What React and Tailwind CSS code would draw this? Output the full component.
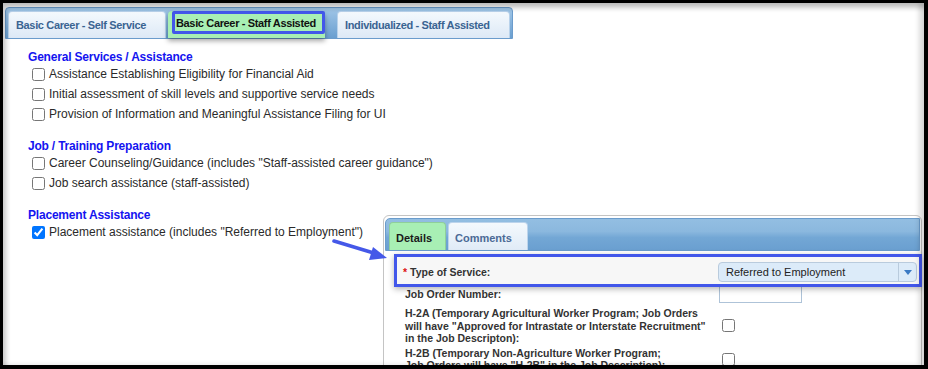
import React from 'react';

const sections = [
  {
    title: 'General Services / Assistance',
    items: [
      { label: 'Assistance Establishing Eligibility for Financial Aid' },
      { label: 'Initial assessment of skill levels and supportive service needs' },
      { label: 'Provision of Information and Meaningful Assistance Filing for UI' },
    ],
  },
  {
    title: 'Job / Training Preparation',
    items: [
      { label: 'Career Counseling/Guidance (includes "Staff-assisted career guidance")' },
      { label: 'Job search assistance (staff-assisted)' },
    ],
  },
  {
    title: 'Placement Assistance',
    items: [{ label: 'Placement assistance (includes "Referred to Employment")', checked: true }],
  },
];

function TopTabs() {
  return (
    <div className="ml-[2px] mt-[4px] w-[508px] h-[32px] rounded-t-[4px] border border-[#6b9ccc] bg-gradient-to-b from-[#a0c6e7] to-[#6a9fd0] flex items-end pl-[2px]">
      <div className="w-[158px] h-[27px] rounded-t-[4px] border border-b-0 border-[#b8d2eb] bg-gradient-to-b from-[#f4f9fd] to-[#dde9f6] flex items-center pl-[7px] text-[11px] font-bold tracking-[-0.35px] text-[#3a6492]">
        Basic Career - Self Service
      </div>
      <div className="relative ml-[2px] w-[157px] h-[27px] rounded-t-[4px] bg-[#a8efb4] shadow-[0_3px_5px_rgba(0,0,0,0.35)] flex items-center pl-[8px] pb-[2px] text-[11px] font-bold tracking-[-0.35px] text-[#111]">
        Basic Career - Staff Assisted
        <div className="absolute left-[4px] top-0 right-0 bottom-[4px] border-[3px] border-[#4257ea] rounded-[2px]" />
      </div>
      <div className="ml-[12px] w-[173px] h-[27px] rounded-t-[4px] border border-b-0 border-[#b8d2eb] bg-gradient-to-b from-[#f4f9fd] to-[#dde9f6] flex items-center pl-[7px] text-[11px] font-bold tracking-[-0.35px] text-[#3a6492]">
        Individualized - Staff Assisted
      </div>
    </div>
  );
}

function Section({ title, items }) {
  return (
    <div className="mt-[15px] first:mt-[11px]">
      <div className="h-[14px] leading-[14px] text-[12px] font-bold tracking-[-0.2px] text-[#1414f0]">{title}</div>
      {items.map((it) => (
        <label key={it.label} className="h-[20px] flex items-center text-[12px] text-[#2a2a2a]">
          <input type="checkbox" defaultChecked={!!it.checked} className="ml-[4px] mr-[4px] w-[13px] h-[13px]" />
          <span>{it.label}</span>
        </label>
      ))}
    </div>
  );
}

function DetailPanel() {
  return (
    <div className="absolute left-[380px] top-[212px] w-[539px] h-[160px] rounded-t-[6px] border border-[#c4c4c4] bg-white z-10">
      <div className="mx-[1px] mt-[2px] h-[33px] rounded-tl-[5px] border border-[#6a9ccc] bg-[linear-gradient(to_bottom,#93bee2_0%,#8bb8de_40%,#73a7d5_60%,#6a9fd0_100%)] flex items-end pl-[3px]">
        <div className="w-[57px] h-[28px] rounded-t-[4px] border border-b-0 border-[#8fcf9a] bg-[#a8efb4] flex items-center pl-[6px] pt-[4px] text-[11px] font-bold text-[#1a1a1a]">
          Details
        </div>
        <div className="ml-[2px] w-[80px] h-[28px] rounded-t-[4px] border border-b-0 border-[#bcd4ec] bg-gradient-to-b from-[#f4f9fd] to-[#e0ebf7] flex items-center pl-[6px] pt-[4px] text-[11px] font-bold text-[#4b6a96]">
          Comments
        </div>
      </div>

      <div className="relative z-10 ml-[10px] mr-[-1px] mt-[3px] h-[33px] border-[3px] border-[#4257ea] bg-[#f7f7f7] shadow-[0_2px_6px_rgba(0,0,0,0.3)] flex items-start">
        <div className="flex-1 pl-[6px] pt-[8px] text-[10.5px] font-bold text-[#333]">
          <span className="text-[#d11]">*</span> Type of Service:
        </div>
        <div className="mt-[5px] mr-[2px] w-[199px] h-[20px] rounded-[4px] border border-[#b9cbdd] bg-[#dcebf9] flex items-center text-[11px] text-[#222]">
          <span className="flex-1 pl-[7px]">Referred to Employment</span>
          <span className="w-[18px] h-full border-l border-[#b9cbdd] flex items-center justify-center">
            <svg width="8" height="5" viewBox="0 0 8 5"><path d="M0 0h8L4 5z" fill="#3b7ac4" /></svg>
          </span>
        </div>
      </div>

      <div className="pl-[21px] text-[10.5px] font-bold text-[#333] whitespace-nowrap">
        <div className="mt-[-1px] flex items-center h-[17px]">
          <div className="w-[314px]">Job Order Number:</div>
          <div className="w-[83px] h-[17px] border border-[#aec3d8] bg-white" />
        </div>
        <div className="mt-[4px] flex items-center">
          <div className="w-[314px] leading-[12.5px]">
            H-2A (Temporary Agricultural Worker Program; Job Orders<br />
            will have "Approved for Intrastate or Interstate Recruitment"<br />
            in the Job Descripton):
          </div>
          <input type="checkbox" className="ml-[3px] w-[13px] h-[13px]" />
        </div>
        <div className="mt-[2px] flex items-center">
          <div className="w-[314px] leading-[12.5px]">
            H-2B (Temporary Non-Agriculture Worker Program;<br />
            Job Orders will have "H-2B" in the Job Description):
          </div>
          <input type="checkbox" className="ml-[3px] w-[13px] h-[13px]" />
        </div>
      </div>
    </div>
  );
}

export default function App() {
  return (
    <div className="relative w-[928px] h-[369px] overflow-hidden bg-white border-black border-l-[3px] border-t-[3px] border-r-[4px] border-b-[4px] font-['Liberation_Sans',Arial,sans-serif]">
      <div className="w-[513px]">
        <TopTabs />
        <div className="pl-[25px]">
          {sections.map((s) => (
            <Section key={s.title} {...s} />
          ))}
        </div>
      </div>

      <DetailPanel />

      <svg className="absolute left-[326px] top-[232px] z-20" width="64" height="30" viewBox="0 0 64 30">
        <line x1="5" y1="6" x2="48" y2="19" stroke="#4558e8" strokeWidth="3.5" strokeLinecap="round" />
        <path d="M44 12 L58 23 L40 25 Z" fill="#4558e8" />
      </svg>

      <div className="pointer-events-none absolute inset-0 z-30 shadow-[inset_3px_5px_5px_rgba(0,0,0,0.22),inset_-5px_0_5px_rgba(0,0,0,0.15)]" />
    </div>
  );
}
